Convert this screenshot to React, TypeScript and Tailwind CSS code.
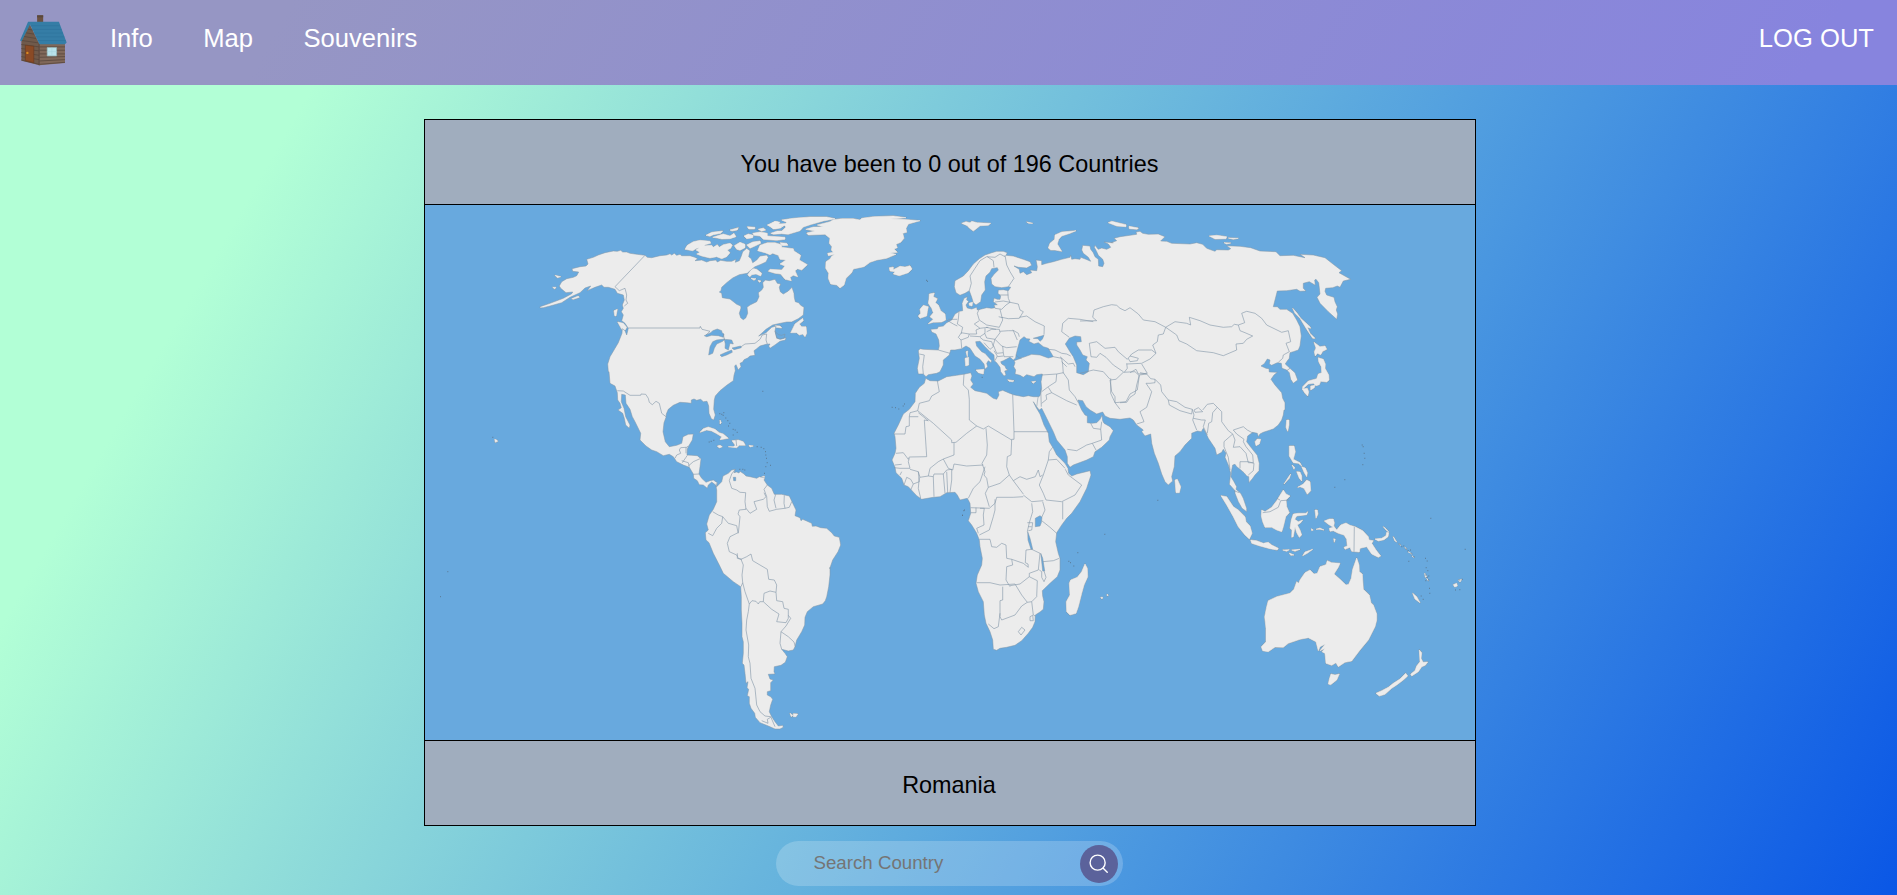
import React from "react";

type Tile = keyof typeof TILES;
type Piece = [Tile, string];

/* Origins of the survey tiles; every tile stores its points at three units per map unit. */
const TILES = {
  na: [530, 200],
  at: [660, 205],
  ca: [580, 370],
  sa: [680, 530],
  eu: [880, 240],
  af: [880, 360],
  sf: [940, 490],
  ru: [1080, 210],
  se: [1120, 370],
  au: [1240, 500],
} as const;

function trace(pieces: Piece[]): string {
  const points = pieces.flatMap(([tile, list]) =>
    list.trim().split(/\s+/).map((pair) => {
      const [x, y] = pair.split(",").map(Number);
      const [ox, oy] = TILES[tile];
      return `${(ox + x / 3).toFixed(1)} ${(oy + y / 3).toFixed(1)}`;
    })
  );
  return "M" + points.join("L");
}

const traceAll = (groups: Partial<Record<Tile, string>>, close: boolean): string =>
  (Object.entries(groups) as Piece[])
    .flatMap(([tile, lists]) => lists.split("|").map((l) => trace([[tile, l]]) + (close ? "Z" : "")))
    .join("");

const AMERICAS = trace([
  ["na", "30,320 60,310 100,295 125,281 128,276 108,278 92,265 88,258 95,245 110,236 130,232 140,227 146,216 128,214 126,206 150,200 168,198 174,192 170,178 190,172 205,165 225,158 250,153 262,154 272,151 278,156 290,156 300,160 315,162 345,166 352,172 365,173 390,167 410,165 420,161 425,165 433,160 440,166 450,163 455,167 480,167 495,172 503,176 495,182 515,180 530,186 540,182 558,180 562,186 572,181 590,184 605,184 618,178 616,187 628,182 634,168 638,155 650,145 660,152 656,170 664,176 668,188 680,180 690,168 710,165 715,172 708,186 690,194 675,200 665,208 652,220 628,224 608,234 590,248 575,262 573,272 568,276 575,280 577,293 600,297 620,313 632,318 633,324 628,340 632,353 640,359 647,354 653,340 651,322 660,315 680,305 687,290 685,278 695,270 700,262 698,248 706,240 718,242 735,238 742,250 752,252 748,262 751,275 760,282 775,273 786,262 792,280 793,292 796,305 806,308 812,316 822,322 820,345 805,356 785,366 770,366 745,371 728,375 708,388 686,408 708,398 725,382 738,378 735,392 740,415 752,418 768,413 766,420 750,424 736,434 720,445 716,438 720,432 708,433 690,438 680,446 672,452 675,466 660,468 653,474 642,479 638,486 630,490 633,500 625,510 618,494 614,498 616,512 612,526 610,542 590,556 570,572 556,588 553,600"],
  ["ca", "403,90 401,118 406,135 401,150 394,146 387,130 386,108 381,94 370,95 362,88 350,91 342,87 334,90 334,100 320,98 300,97 280,106 265,118 259,132 258,142 252,158 249,185 256,215 268,230 290,226 305,220 309,200 325,193 340,192 337,210 328,225 322,236 321,255 335,256 352,257 363,266 360,290 357,312 365,325 378,337 390,332 400,330 412,338 410,350 425,335 429,318 445,310 455,300 466,298 462,308 470,306 477,309 480,304 492,312 498,318 510,320 530,325 538,320 555,324 552,330 562,345 575,355 583,373 605,373 628,378 636,395 648,420 645,437 660,443 663,452 668,448 680,453 695,460 697,469 708,468 722,473 740,475 755,488 763,498 778,502 782,525 774,545 758,570 749,596"],
  ["sa", "450,112 450,135 446,170 440,200 436,212 428,222 400,230 382,245 375,262 374,285 365,305 350,330 345,350 340,360 325,363 305,358 315,370 322,380 316,397 303,406 283,410 282,425 285,432 265,433 270,447 280,450 272,458 272,482 262,485 262,495 272,500 278,508 272,525 268,545 275,560 285,575 295,588 308,586 310,592 300,597 285,597 265,588 240,578 226,562 224,550 213,535 208,520 208,500 202,497 206,478 201,473 204,455 198,460 195,430 192,405 187,400 190,370 190,335 186,320 186,280 184,240 184,200 182,170 160,155 130,130 118,105 100,70 87,38 78,30 76,8"],
  ["ca", "376,488 385,480 380,462 388,435 400,418 410,395 410,360 407,345 395,336 385,345 382,355 370,345 358,344 352,332 341,325 340,312 328,292 310,285 290,275 280,260 268,253 250,257 230,245 215,240 198,228 180,210 182,190 165,155 157,140 150,118 138,100 136,75 125,73 124,95 132,115 137,140 150,165 148,175 137,165 133,145 128,130 114,120 124,113 120,100 113,90 112,68 105,48 90,40 87,5"],
  ["na", "235,515 233,492 240,470 252,450 265,428 276,400 277,386 285,392 290,405 295,385 285,370 275,362 280,345 274,335 280,325 277,315 283,300 280,285 262,280 255,268 235,262 222,262 215,255 195,262 172,272 182,258 165,264 150,278 120,292 95,308 60,318 40,323 30,324"],
]) + "Z";

const EURASIA = trace([
  ["eu", "115,332 120,326 130,328 175,330 178,318 176,300 168,282 155,276 152,268 172,266 175,260 190,258 200,248 215,240 225,222 238,214 248,212 246,190 252,175 262,170 260,180 266,184 258,195 262,204 275,207 290,202 292,210 320,203 335,205 345,203 342,195 352,194 340,185 342,174 352,178 360,178 362,168 354,160 355,150 370,149 385,152 392,142 386,140 365,143 345,140 335,132 333,115 342,103 355,90 352,83 335,86 330,97 318,108 314,125 316,150 305,165 302,185 288,195 280,188 275,172 268,152 255,160 240,166 228,158 223,140 225,122 250,108 265,92 280,72 298,56 315,45 335,38 350,34 370,34 382,38 378,46 400,48 430,58 450,65 455,76 440,84 415,82 402,78 418,88 420,100 430,95 440,104 455,98 450,90 470,92 472,80 468,60 485,62 485,74 500,70 520,65 545,58 570,52 572,45 575,58 585,56 600,58 602,52 618,58 632,64 625,52 610,40 605,30 608,16 630,18 632,28 640,38 645,50 655,58 656,78 668,80 672,70 668,58 655,46 650,35 643,22 645,16 655,28 665,24 680,28 692,22 685,12 672,6 700,8"],
  ["ru", "92,98 110,92 102,85 120,80 135,78 170,73 168,66 180,64 188,70 205,73 235,72 255,80 242,93 260,94 275,100 330,102 350,98 368,103 380,115 405,124 410,119 445,120 452,116 440,107 480,109 512,113 540,123 588,125 600,137 640,136 675,143 660,133 700,135 735,143 760,163 785,182 777,188 812,208 790,213 780,232 772,228 758,233 737,235 735,244 740,255 762,262 765,275 772,290 769,300 773,312 770,328 745,305 720,280 711,262 720,252 716,218 708,208 704,210 706,226 688,215 670,220 670,235 678,243 660,244 650,238 620,242 592,243 585,270 580,290 592,290 600,298 620,298 638,310 650,330 660,350 664,378 660,408 655,420 640,425 630,428 628,445 620,455 616,462 630,475 645,488 653,510 640,520 632,508 628,488 620,480 606,475 604,460 592,458 575,466 568,462 570,450 562,447 553,461 543,468 558,475 567,476 568,486 592,487 582,495 573,508 585,525 605,548 608,565 615,578 615,600"],
  ["se", "492,120 490,135 485,150 475,165 460,177 430,187 420,192 415,200 412,190 398,187 383,198 380,215 395,235 412,256 418,280 417,302 405,315 398,325 387,338 386,320 380,318 372,308 360,298 350,290 345,283 338,285 335,300 333,320 342,335 350,350 348,358 362,370 370,385 380,415 380,425 366,415 355,395 345,370 345,362 328,343 332,310 325,285 315,262 318,250 310,238 305,247 290,255 285,235 265,205 258,190 250,175 244,185 232,183 215,190 215,205 195,225 180,245 165,258 163,290 155,320 158,333 145,345 135,335 125,312 115,280 103,250 95,220 92,192 75,198 65,185 70,180 50,165 40,150 30,144 0,148"],
  ["af", "720,178 690,175 675,168 668,156 650,162 630,150 618,140 608,122 594,120 597,132 605,150 615,165 622,168 622,188 635,190 650,188 660,178 666,166 668,182 672,190 690,200 700,212 690,230 688,240 665,262 645,275 640,290 620,300 580,315 570,322 562,310 562,290 555,270 530,240 520,215 500,175 485,145 478,150 470,140 474,112 480,107 485,85 483,65 487,45"],
  ["eu", "487,402 470,404 462,410 440,404 430,412 420,406 405,402 407,390 401,380 405,368 402,362 415,358 425,354 415,348 408,345 407,354 400,360 390,352 380,357 370,362 362,365 365,372 375,378 378,386 384,390 374,393 378,405 372,408 362,395 360,382 350,368 343,362 342,345 330,335 315,320 300,304 287,305 290,318 305,335 315,340 335,362 333,368 325,362 320,370 323,380 315,388 312,372 300,358 285,348 270,325 258,318 245,326 225,330 212,330 208,345 190,360 190,375 180,395 170,400 145,404 138,410 130,402 115,402 112,385 118,355"],
]) + "Z";

const AFRICA = trace([
  ["af", "137,55 150,62 175,63 200,50 230,46 255,42 272,38 276,48 272,60 280,72 272,82 285,92 300,95 320,100 340,115 350,118 357,105 355,95 368,91 385,98 400,104 430,110 445,107 460,110 475,110 479,130 478,150 470,140 460,125 468,142 480,162 492,195 505,220 508,245 520,265 530,285 555,310 564,325 566,340 575,348 590,342 630,332 633,345 620,385 600,425 575,460 560,475"],
  ["sf", "380,85 365,105 350,128 347,155 355,190 360,205 360,240 352,260 330,280 307,302 308,318 312,335 310,358 300,366 286,375 285,395 278,412 265,430 245,452 225,466 200,472 180,475 170,481 160,478 158,450 150,425 138,400 133,375 130,335 115,305 108,280 112,255 125,225 127,205 120,170 118,150 110,130 95,105 85,92 92,70 90,40 82,25"],
  ["af", "262,415 240,420 232,405 225,397 200,398 180,410 160,412 125,418 110,407 85,380 72,375 65,355 48,338 45,322 36,300 45,280 48,265 45,230 42,220 55,195 70,162 88,148 105,125 106,100 118,82 133,70"],
]) + "Z";

const ISLANDS = traceAll(
  {
    na: "465,148 472,136 490,125 510,121 540,124 542,130 525,134 520,140 500,145 488,152|498,150 515,138 545,136 550,142 562,134 568,142 580,134 600,130 607,135 602,145 592,150 600,158 590,170 575,176 560,170 540,174 515,168 500,162 510,157|528,106 545,97 578,93 572,100 550,104 540,109|548,112 560,108 580,102 600,108 612,100 618,110 600,116 575,117 562,114|600,90 625,83 622,90 606,93|652,80 675,82 674,87 656,87|642,108 655,102 670,106 668,113 650,116|685,88 700,84 707,90 695,94|668,100 690,96 712,100 712,108 765,112 765,118 740,121 700,118 690,108 672,106|613,137 630,127 645,133 645,143 630,151 620,148|650,135 668,126 690,123 692,130 675,138 660,145|712,75 735,65 745,66 742,72 765,72 752,84 735,87|683,152 690,136 712,128 735,128 755,134 755,142 790,146 792,153 812,166 808,180 832,194 815,210 803,206 795,212 803,230 790,226 780,232 784,242 765,238 752,222 735,220 715,214 720,208 755,210 765,198 750,192 768,180 750,178 745,166 728,160 720,164 705,158|653,225 665,205 680,208 695,220 692,228 678,222 665,224 660,230|750,128 770,130 774,136 758,137|663,235 678,236 672,241|684,241 693,243 688,247|782,398 795,372 818,355 820,362 808,372 815,380 828,380 830,400 825,410 818,402 808,405 800,398|263,366 280,370 290,382 285,391 275,388|252,332 262,328 258,348 254,347|125,296 145,288 148,292 130,298|75,226 92,230 82,233|68,262 78,262 74,267|735,377 750,378 755,384 738,382",
    at: "325,60 345,49 360,52 355,58 375,56 370,64 340,72|365,45 400,40 450,36 500,36 525,41 490,48 455,58 430,66 420,77 385,88 365,86 340,88 332,85 352,78 365,78 378,66 372,60 380,52|437,73 460,66 490,66 472,60 510,50 520,44 545,41 580,41 600,45 605,40 640,35 700,33 738,38 690,42 725,43 780,47 745,57 738,70 740,82 728,85 732,100 722,112 708,118 712,128 702,132 712,142 690,144 708,148 680,160 650,165 630,172 612,185 580,192 575,203 558,220 552,240 540,249 530,240 512,237 505,220 506,205 497,190 498,170 510,162 515,154 525,148 505,152 503,145 520,142 514,135 516,125 508,115 510,100 495,88 445,90 440,84 465,78|688,188 700,186 700,194 712,188 720,184 735,186 750,182 756,192 745,203 718,212 700,207 705,200 690,198",
    ca: "360,187 370,176 385,171 405,178 418,188 430,192 445,205 420,209 425,200 408,190 395,183 380,180|445,230 460,230 466,226 456,212 475,210 490,215 496,226 478,226 470,233|412,228 420,226 427,230 418,234|507,226 520,228 510,231|543,322 553,318 553,326|420,150 424,158 420,162",
    sa: "330,550 338,556 334,560|340,551 353,552 348,560 340,560",
    eu: "148,162 163,159 160,170 172,176 166,188 175,195 182,212 195,222 197,240 185,246 160,247 145,251 160,238 150,230 160,218 155,205 145,190 147,178|120,208 130,196 145,200 142,215 140,228 120,235 115,228 122,220|267,190 278,186 276,198 268,196|383,419 402,422 398,425 387,424|455,425 467,424 460,430|288,390 312,388 310,402 295,398|255,355 266,352 266,375 257,378|258,335 263,333 262,350|512,30 505,24 510,10 524,-2 525,-15 545,-24 588,-28 570,-20 545,-12 536,-2 532,12 545,34 525,30|245,-50 258,-55 270,-52 275,-56 292,-52 310,-51 332,-50 325,-44 300,-43 292,-36 280,-27 268,-36 262,-43|440,-54 458,-50 446,-50",
    ru: "85,38 95,34 138,44 138,50 110,48|147,49 175,54 172,58 148,56|388,78 410,76 440,80 438,86 405,87|445,84 475,85 460,88|432,98 452,99 440,102|638,295 650,308 662,325 690,350 692,355 682,352 690,370 705,385 698,385 680,358 660,325 645,310|702,397 720,410 735,408 740,418 728,424 722,434 712,430 706,438 703,425 708,414|715,443 730,448 736,462 735,475 746,495 747,510 740,516 722,514 718,524 708,527 700,520 685,522 668,537 668,530 685,513 710,506 715,492 725,488 724,470 716,455|667,537 682,535 686,545 683,558 675,550|692,528 705,526 703,533 692,540",
    se: "165,330 172,328 182,350 178,368 168,368|500,150 507,150 507,165 503,184 498,172|405,215 412,207 422,208 418,222 408,227|303,377 320,380 340,410 355,420 375,440 378,455 390,468 396,490 388,507 375,495 355,470 340,440 320,405|392,510 410,512 430,520 445,517 455,525 475,535 472,540 450,536 420,528 395,520|425,420 435,425 455,412 470,392 490,360 498,372 510,378 498,390 500,410 508,428 497,440 490,470 485,485 470,480 455,472 435,472 428,455 424,438|520,432 535,430 558,430 563,425 560,434 530,438 524,448 535,455 548,450 542,458 532,465 540,480 545,495 538,502 530,488 525,470 520,500 515,502 516,480 510,475 514,450|508,228 522,228 526,245 520,268 540,278 545,288 535,280 520,278 508,258|516,285 524,292 522,298|530,305 540,306 545,318 545,333 538,325|545,290 556,294 562,308 560,320 553,308|533,352 550,342 560,330 570,335 572,362 562,373 552,355 540,350|512,312 508,325 492,342 505,322|585,420 592,420 594,432 588,445|488,540 508,539 500,544|515,540 540,538 525,544|548,557 555,546 578,538 562,550|508,549 522,555 512,556|588,478 600,474 612,480 600,478|574,476 580,480 575,482|613,453 628,447 640,447 643,458 641,468 650,480 662,465 678,459 690,466 705,470 728,482 745,500 747,510 760,512 755,520 768,540 782,558 775,562 755,552 740,530 720,535 718,546 695,544 690,532 675,538 672,532 682,528 680,508 672,495 655,490 640,482 630,484 628,475 640,472 625,463|641,506 646,508 643,517",
    sf: "435,222 442,235 443,260 432,285 425,310 415,350 408,370 390,375 380,365 379,335 390,315 388,280 392,270 412,262 425,245|482,322 488,322 486,327|501,313 505,315 502,318",
    au: "64,440 72,432 78,425 78,385 74,350 80,320 85,302 110,290 150,280 162,268 170,245 176,250 180,240 195,218 210,210 222,222 232,220 240,200 258,194 262,182 275,188 300,190 295,202 282,222 300,238 318,255 326,253 334,235 338,208 350,174 357,195 358,215 367,222 370,268 388,285 393,308 400,315 410,342 410,360 405,380 385,420 360,450 335,483 315,487 295,500 288,488 275,496 258,490 255,460 246,455 255,445 240,452 256,432 240,440 235,452 228,425 205,413 180,418 145,430 130,442 105,441 85,455 68,452|273,522 285,525 298,522 290,540 272,554 265,552 268,538|538,450 545,458 543,475 549,487 563,486 556,496 545,500 535,515 515,528 512,522 525,512 530,498 540,485|497,520 503,528 490,540 470,555 455,565 435,583 418,588 408,580 425,572 445,562 460,550 480,537|405,117 425,115 438,107 440,97 446,98 444,110 432,119 415,123|430,80 438,86 446,96 438,90|518,280 530,290 540,308 525,297|460,110 470,126 464,122|640,254 650,250 652,258 644,261|656,240 665,238 660,246|477,132 482,136|494,142 500,147|504,155 516,162|516,168 522,172|554,220 560,230 556,232|560,235 565,242|-2236,-182 -2230,-180 -2227,-176 -2234,-173",
  },
  true
);

const LAKES = traceAll(
  {
    na: "523,407 542,398 548,392 562,387 575,392 576,398 582,402 580,412 565,407 545,406 530,410|536,465 540,440 548,425 560,420 585,417 578,424 560,432 553,445 548,460|583,418 605,420 610,432 600,430 595,450 585,445 586,432|570,465 585,458 605,450 607,457 590,465 575,470|606,444 632,438 634,443 612,449|735,394 745,404 755,406 765,402 762,414 748,417 740,412",
    ca: "460,322 467,322 467,332 461,332",
    eu: "408,345 413,325 420,300 432,290 440,296 450,297 446,304 462,312 475,308 490,320 505,325 520,350 505,354 480,345 455,343 430,352 418,354|460,295 492,286 487,298 480,304 474,296|556,312 568,295 585,288 602,290 604,305 590,306 590,315 600,330 608,345 622,350 618,360 628,370 625,395 610,404 590,398 590,375 580,350 570,335",
    sf: "286,85 300,77 306,82 304,98 300,108 286,110|263,125 270,145 278,178 273,178 264,150|302,190 308,205 314,243 308,243 305,215",
  },
  true
);

const FRONTIERS = traceAll(
  {
    na: "295,384 510,384 511,379 516,388 540,394 528,405|580,402 583,417|632,441 645,432 675,430 690,418 697,405 710,402 708,420 712,432|345,166 255,260 268,272 285,265 290,285 288,300 293,310 283,318",
    ca: "112,62 130,63 150,76 182,76 183,72 197,73 205,85 208,97 217,104 228,94 238,100 245,130 258,140|285,265 290,255 302,250 298,240 302,233 318,232 318,250|318,233 325,228|307,278 318,262 322,256|325,288 340,275 360,266|305,272 325,278 328,290|340,313 357,312|409,340 409,352|466,298 455,312 448,332 455,355 470,360 480,367 497,368 495,395 498,418|498,418 478,420 474,432 480,440 475,490|398,425 415,435 428,440 445,460 470,467 474,488|428,440 425,460 410,475 398,497 385,490|474,488 450,500 442,520 448,545 470,555 475,565 485,568|498,415 510,430 530,418 522,395 550,388 558,380 552,368|562,345 552,358 560,380 562,410 568,424 590,418 615,415 628,412 635,395|587,373 582,390 588,415|613,376 612,400 615,415|468,210 470,228",
    sa: "172,70 172,85 183,88|183,88 190,105 186,135 188,158 183,170|183,88 200,80 213,72 218,92 240,105 262,118 266,148 283,150 290,165 288,187|188,158 195,185 208,222 216,212 228,214 235,222 239,215 250,215 252,190 270,183 288,187 290,212 308,215 312,235 325,238 325,265 318,278 290,275 297,252 275,238 250,215|325,256 332,265 318,288 303,305 300,340 305,358|303,305 325,320 342,336 346,350|208,222 205,245 200,270 198,300 206,345 205,380 210,400 213,445 225,475 230,525 240,545 255,558 272,560|272,562 262,568 264,580 245,572|272,560 285,590",
    eu: "268,152 274,130 270,108 285,85 300,62 320,50 345,52 360,42 375,50|322,50 340,62 342,82|375,45 380,75 390,95 402,115 385,140|383,152 385,175 390,187|357,165 385,165|345,186 370,183 390,187|345,205 365,208 378,195 390,187|390,187 415,192 420,210 430,215 418,235 385,236 365,232|298,207 292,220 298,240 320,255 358,262 368,240 360,208|325,262 300,265 283,252 298,242|237,214 235,238 232,252 248,262 243,282|200,240 220,252 232,258|205,238 232,238|243,280 235,292 243,300 265,292 268,282 243,278|268,282 290,282 288,270 300,265|315,265 315,280 300,290 270,288|243,300 245,325|175,330 210,340|118,342 133,345 128,380 130,402|320,275 335,268 358,268 360,278 345,298 320,294 314,280|360,274 385,272 400,272 412,300|345,298 365,318 380,323 410,320|398,270 415,280 418,290|345,298 340,315 350,340 370,338 368,318|370,338 372,350 400,350|300,292 310,300 335,305 340,320 330,328 312,308|342,332 352,348 345,362|352,350 370,348|418,232 440,228 465,245 493,258 492,284|505,328 525,330 545,340 560,342 572,348|520,350 545,355 548,375 550,400|540,350 565,372 580,370 585,380|545,365 560,380|568,292 545,275 548,250 565,235 600,238 640,245|356,230 368,233|348,268 318,262",
    ru: "0,333 50,332 38,322 42,300 70,290 95,284 110,286 120,295 135,302 150,293 175,312 190,330 225,335 257,352|257,352 250,372 235,375 232,395 218,405 228,430|257,352 285,335 320,340 332,345 328,322 360,332 390,345 430,352 455,350 463,343 475,345 480,362 495,368 518,378 500,388 490,400 468,402 470,420 430,437 400,428 350,422 320,402 297,392 290,375 257,352|475,345 494,338 485,310 500,304 525,310 545,325 560,345 605,367 625,362 632,395 618,400 628,425|628,425 610,435 608,445 595,457|620,482 630,475|228,430 215,420 175,420 155,432 142,448 115,425 105,412 75,415 50,395 28,400 33,440|33,440 50,442 60,430 78,442 100,465 130,485|228,430 210,447 185,460 140,462|150,438 175,445 172,452 150,455 145,445|140,460 142,475 133,487|185,462 202,490 175,492 168,478 150,488|90,510 108,508 130,487 165,485 178,497 172,540 150,552 138,575 105,578 105,560 95,545 90,510|0,490 40,480 70,485 90,508",
    se: "0,98 20,97 30,82 45,72 50,45 58,15 80,12|105,28 105,38 90,40 78,40 95,65 80,112 60,125 72,155 50,162|60,8 80,12 92,26 105,28 122,45 125,65 145,90|145,90 170,95 195,112 217,118 215,132 180,122 148,105 145,90|222,120 235,113 248,125 225,127 222,120|217,118 222,135 218,150 230,180|220,145 245,150 256,150 250,170 262,195|248,120 262,103 280,100 292,112 278,128 275,155 266,160 262,190|292,112 305,125 305,155 325,182 338,192 312,215 312,230 325,262 330,300|338,192 345,210 340,232 360,230 378,250 385,278 400,278 398,255 378,230 370,215 372,208 350,192 340,180 370,170 382,180 400,190|360,295 360,275 385,275 402,280 400,302 385,315|342,362 358,368|428,428 450,425 475,412 482,392 508,390|470,385 480,390|703,470 702,545",
    af: "485,45 530,42 550,38 565,60 568,90 585,110 595,128|530,42 528,65 505,80 485,95|505,82 515,98 560,122 590,135|515,98 498,105 500,118 485,130|562,268 590,272 620,255 637,250 665,240 662,208 640,205 632,190|637,250 648,270|662,208 665,185|482,85 484,140|692,55 692,100 705,128 720,148|172,62 178,95 155,108 148,122 118,130 113,152 90,158 88,170 115,170|88,170 88,198 78,200 75,222 42,222|113,152 160,190 215,240 215,248 228,247 260,220 290,198|252,42 250,75 265,90 268,118 268,180 290,198 310,207 325,198 395,240|398,104 402,215 402,238 395,238|402,215 505,215|395,238 393,285 382,290 380,320 388,345|133,180 140,290 88,291 85,298 70,278 48,280|115,158 145,182 133,180|88,295 85,305 90,325 60,325 42,323|45,315 65,313|222,248 222,285 190,297 175,305 150,325 145,348 120,352 115,335 90,328|190,297 205,325 218,330 222,312 260,318 310,315|318,205 322,255 320,285 306,310|315,320 300,365 280,385 265,415|145,348 160,350 162,342 190,342 200,330 215,328|160,350 162,410|190,342 195,400|200,335 203,398|215,328 215,360 210,397|65,335 60,345|115,335 118,365 100,372 92,358 80,352 72,375|92,390 100,372|118,352 115,385 122,415|306,310 315,335 312,345 320,355 325,382 316,400 328,440|325,382 360,370 388,345 400,362 430,402|400,362 420,350 440,358 466,350 475,330 480,350 488,345|505,300 490,345 478,375 490,400 498,420|430,405 455,425 490,422|430,410 400,412 350,412 345,430 328,445 272,443|518,262 508,275 505,300 530,298 555,325|556,328 565,345 605,375 585,405 545,425 498,420|548,425 548,478|272,458 288,458 288,443",
    sf: "165,28 165,60 160,80 148,120 118,135|120,55 133,55 130,75 132,105 110,115 115,130|118,148 150,148 155,170 170,172 185,160 198,165 200,205 215,208 218,225 200,230 198,270 210,290|215,208 250,220 265,232 264,222 256,218 258,180 275,178 300,190 295,240 268,250 268,260|110,278 150,278 180,285 225,282|210,287 240,282 268,260 292,272 290,320 275,335 262,337 245,315 225,282|188,290 188,330 180,332 180,380 185,390 225,375 245,348 262,337|180,370 175,410 162,416 145,402|275,335 280,375 286,378|270,380 278,376 280,392 270,392 270,380|235,425 245,412 255,420 243,435 235,425|308,215 340,212 358,205|305,92 330,112 350,130|275,40 278,65 268,98 262,125|305,82 315,60 308,35|262,98 278,98 275,120 265,122|265,110 275,110|298,240 305,245 305,262 312,275 318,262 312,243",
  },
  false
);

const SPECKS: Record<string, string> = {
  ca: "418,131 424,133 430,128 428,136 436,144 442,152 448,160 444,168 458,178 464,180 470,187 458,195 386,216 392,214 400,211 530,230 542,232 550,236 555,245 556,255 558,265 560,278 556,290 570,286 478,298 487,298 493,300 552,310 547,64",
  af: "35,142 45,143 55,147 68,138 72,132 250,452 246,466",
  sf: "385,214 390,218 400,228 412,188 493,133 72,60 66,76",
  se: "725,225 728,230 731,250 733,265 727,284 673,329 643,352 112,391",
  au: "478,133 484,140 490,138 497,147 503,152 510,150 512,160 520,170 505,184 555,175 560,183 557,203 562,212 556,225 560,232 565,228 556,242 565,240 567,265 568,280 542,288 548,298 658,240 665,238 658,269 645,270 571,55 674,148 -2400,290 -2378,215 -2243,-188",
  eu: "138,121 141,124 305,412",
};

const SPECK_PATH = Object.entries(SPECKS)
  .flatMap(([tile, list]) =>
    list.split(" ").map((pair) => {
      const [x, y] = pair.split(",").map(Number);
      const [ox, oy] = TILES[tile as Tile];
      return `M${(ox + x / 3).toFixed(1)} ${(oy + y / 3).toFixed(1)}h1`;
    })
  )
  .join("");

function WorldMap() {
  return (
    <svg viewBox="425 205 1050 535" className="block h-[535px] w-full bg-[#68a9de]" role="img">
      <g fill="#ececec" stroke="#8095a5" strokeWidth=".5" strokeLinejoin="round">
        <path d={ISLANDS} strokeWidth="1.3" />
        <path d={ISLANDS} stroke="#ececec" strokeWidth=".6" />
        <path d={AFRICA} />
        <path d={EURASIA} />
        <path d={AMERICAS} />
        <path d={LAKES} fill="#68a9de" />
        <path d={FRONTIERS} fill="none" stroke="#7f94a6" strokeWidth=".6" />
        <path d={SPECK_PATH} fill="none" stroke="#587389" strokeWidth=".9" />
      </g>
    </svg>
  );
}

function Cabin() {
  return (
    <svg viewBox="60 44 140 152" className="h-[51px] w-[47px]" aria-hidden="true">
      <path d="M111 45h18v25h-18z" fill="#6b5140" />
      <path d="M111 45h18v6h-18z" fill="#59483c" />
      <path d="M64 120L88 70l30 60v64l-54-14z" fill="#705a4b" />
      <path d="M117 130h77v57l-77 7z" fill="#806859" />
      <g stroke="#55443a" strokeWidth="2.2" fill="none">
        <path d="M82 86l16 3M77 97l25 4M72 108l36 6M66 120l48 7M64 132l53 7M64 144l53 7M64 156l53 8M64 168l53 9M64 178l53 13" />
        <path d="M118 139h76M118 149h76M118 160h76M118 170l76-2M118 181l76-4M118 191l76-6" />
      </g>
      <path d="M117 130v64" stroke="#5a4639" strokeWidth="3" />
      <path d="M76 134l25 3v49l-25-6z" fill="#8a4a25" stroke="#6b3a20" strokeWidth="2" />
      <circle cx="82" cy="157" r="3.5" fill="#d98a20" />
      <path d="M141 141h28v25h-28z" fill="#b9e3ea" stroke="#94b9bd" strokeWidth="2" />
      <path d="M155 141v25M141 153h28" stroke="#a5d2da" strokeWidth="1.5" />
      <path d="M84 64h92l23 62-5 5h-76L90 72l-25 50-5-2z" fill="#357da6" />
      <path d="M91 76h88M96 87h88M102 98h86M107 109h85M112 120h84" stroke="#2d7199" strokeWidth="1.5" />
    </svg>
  );
}

function SearchIcon() {
  return (
    <svg viewBox="0 0 24 24" className="h-[21px] w-[21px]" fill="none" stroke="#fff" strokeWidth="1.6" strokeLinecap="round">
      <circle cx="11" cy="11" r="8.6" />
      <path d="M17.4 17.4L22 22" />
    </svg>
  );
}

const LINKS = ["Info", "Map", "Souvenirs"];

export default function App() {
  return (
    <div className="flex h-[895px] flex-col overflow-hidden bg-[linear-gradient(120deg,#b2ffd6_15%,#0a57e6_100%)] font-['Liberation_Sans',Arial,sans-serif] text-black">
      <nav className="flex h-[85px] shrink-0 items-start justify-between bg-[linear-gradient(120deg,#9696c4_15%,#8784de_95%)] pr-[23px] pl-5 text-[25.6px] leading-[30px] text-white">
        <div className="flex items-start">
          <a href="#home" className="mt-[15px] mr-[43px]" aria-label="Home">
            <Cabin />
          </a>
          <ul className="mt-[23px] flex gap-[50.5px]">
            {LINKS.map((link) => (
              <li key={link}>{link}</li>
            ))}
          </ul>
        </div>
        <a href="#logout" className="mt-[23px]">LOG OUT</a>
      </nav>

      <main className="flex flex-col items-center pt-[34px] pl-[3px]">
        <section className="w-[1052px] border border-black text-[23.4px]">
          <header className="flex h-[84px] items-center justify-center bg-[#a0adbe] pt-1.5 pr-px">
            You have been to 0 out of 196 Countries
          </header>
          <div className="border-y border-black">
            <WorldMap />
          </div>
          <footer className="flex h-[84px] items-center justify-center bg-[#a0adbe] pt-1.5 pr-0.5">Romania</footer>
        </section>

        <form className="mt-[15px] mr-0.5 flex h-[45px] w-[347px] items-center justify-between rounded-full bg-white/20 pr-[5px] pl-[38px]">
          <input
            type="text"
            placeholder="Search Country"
            className="w-60 bg-transparent text-[18.7px] outline-none placeholder:text-[#757575]"
          />
          <button type="button" aria-label="Search" className="flex size-[38px] items-center justify-center rounded-full bg-[#5b629b]">
            <SearchIcon />
          </button>
        </form>
      </main>
    </div>
  );
}
